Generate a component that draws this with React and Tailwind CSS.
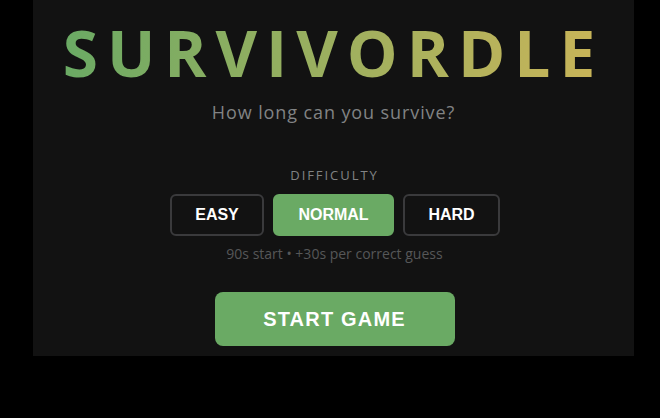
export default function App() {
  return (
    <div className="w-[660px] h-[418px] bg-black overflow-hidden">
      <div className="ml-[33px] w-[601px] h-[356px] bg-[#121212] flex flex-col items-center font-['Open_Sans',sans-serif]">
        <h1 className="mt-[14px] text-[64px] leading-[78px] font-bold tracking-[0.14em] bg-gradient-to-r from-[#6aaa64] to-[#c9b458] bg-clip-text text-transparent">
          SURVIVORDLE
        </h1>
        <p className="mt-[8px] text-[18px] leading-[24px] tracking-[0.05em] text-[#818384]">
          How long can you survive?
        </p>
        <p className="mt-[42px] ml-[2px] text-[13px] leading-[18px] tracking-[0.15em] text-[#818384]">
          DIFFICULTY
        </p>
        <div className="mt-[10px] ml-[3px] flex gap-[9px] text-white font-bold text-[16px] font-['Liberation_Sans',Arial,sans-serif]">
          <button className="w-[94px] h-[42px] rounded-[6px] border-2 border-[#3a3a3c] bg-transparent">EASY</button>
          <button className="w-[121px] h-[42px] rounded-[6px] border-2 border-[#6aaa64] bg-[#6aaa64]">NORMAL</button>
          <button className="w-[97px] h-[42px] rounded-[6px] border-2 border-[#3a3a3c] bg-transparent">HARD</button>
        </div>
        <p className="mt-[9px] ml-[2px] text-[14px] leading-[18px] text-[#565758]">
          90s start • +30s per correct guess
        </p>
        <button className="mt-[29px] ml-[2px] w-[240px] h-[54px] rounded-[8px] bg-[#6aaa64] text-white font-bold text-[20px] tracking-[0.06em] font-['Liberation_Sans',Arial,sans-serif]">
          START GAME
        </button>
      </div>
    </div>
  );
}
